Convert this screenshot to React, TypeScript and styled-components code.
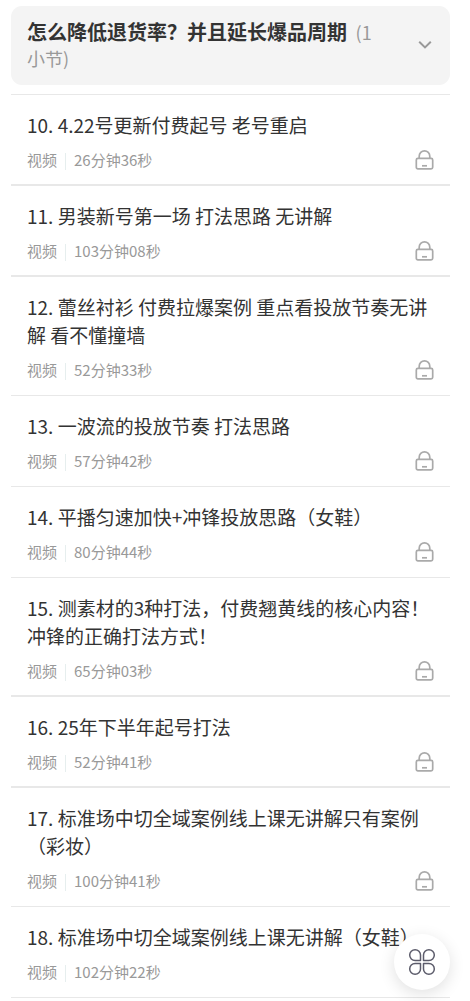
import React, { useState } from 'react';
import styled, { createGlobalStyle } from 'styled-components';

const GlobalStyle = createGlobalStyle`
  * {
    box-sizing: border-box;
  }
  body {
    margin: 0;
    background: #fff;
    color: #333;
    font-family: 'Noto Sans CJK SC', 'Noto Sans', sans-serif;
  }
`;

const Page = styled.main`
  padding: 6px 20px 0 11px;
`;

const ChapterHeading = styled.h2`
  margin: 0 0 9px;
  font-size: 20px;
`;

const ChapterToggle = styled.button`
  display: flex;
  align-items: center;
  justify-content: space-between;
  gap: 32px;
  width: 100%;
  padding: 13px 18px 14px 16px;
  border: 0;
  border-radius: 11px;
  background: #f4f4f4;
  color: #333;
  font: inherit;
  line-height: 26px;
  text-align: left;
  cursor: pointer;
`;

const ChapterTitle = styled.span`
  font-weight: 700;
  margin-right: 4px;
`;

const ChapterCount = styled.span`
  color: #999;
  font-size: 18px;
  font-weight: 400;
  line-height: 18px;
`;

const Chevron = styled.svg<{ $open: boolean }>`
  flex: none;
  transform: ${(p) => (p.$open ? 'none' : 'rotate(180deg)')};
`;

const LessonList = styled.ul`
  margin: 0;
  padding: 0;
  border-top: 1px solid #e8e8e8;
  list-style: none;
`;

const LessonItem = styled.li<{ $thick?: boolean }>`
  border-bottom: ${(p) => (p.$thick ? 2 : 1)}px solid #e8e8e8;
`;

const LessonLink = styled.a<{ $thick?: boolean }>`
  display: block;
  padding: 16px 16px ${(p) => (p.$thick ? 14 : 15)}px;
  color: inherit;
  text-decoration: none;
`;

const LessonTitle = styled.div`
  font-size: 19px;
  line-height: 28px;
`;

const LessonMeta = styled.div`
  display: flex;
  align-items: center;
  height: 20px;
  margin-top: 11px;
  color: #999;
  font-size: 15px;
  line-height: 20px;
`;

const Divider = styled.span`
  width: 1px;
  height: 17px;
  margin: 3px 8px 0;
  background: #e6eeee;
`;

const LockSlot = styled.span`
  display: flex;
  margin-left: auto;
`;

const MenuButton = styled.button`
  position: fixed;
  right: 20px;
  bottom: 11px;
  display: flex;
  align-items: center;
  justify-content: center;
  width: 56px;
  height: 56px;
  padding: 0;
  border: 0;
  border-radius: 50%;
  background: #fff;
  box-shadow: 0 4px 16px rgba(0, 0, 0, 0.12);
  cursor: pointer;
`;

interface Lesson {
  title: string;
  duration: string;
  thick?: boolean;
}

const lessons: Lesson[] = [
  { title: '10. 4.22号更新付费起号 老号重启', duration: '26分钟36秒', thick: true },
  { title: '11. 男装新号第一场 打法思路 无讲解', duration: '103分钟08秒', thick: true },
  { title: '12. 蕾丝衬衫 付费拉爆案例 重点看投放节奏无讲解 看不懂撞墙', duration: '52分钟33秒' },
  { title: '13. 一波流的投放节奏 打法思路', duration: '57分钟42秒' },
  { title: '14. 平播匀速加快+冲锋投放思路（女鞋）', duration: '80分钟44秒' },
  { title: '15. 测素材的3种打法，付费翘黄线的核心内容！冲锋的正确打法方式！', duration: '65分钟03秒', thick: true },
  { title: '16. 25年下半年起号打法', duration: '52分钟41秒', thick: true },
  { title: '17. 标准场中切全域案例线上课无讲解只有案例（彩妆）', duration: '100分钟41秒' },
  { title: '18. 标准场中切全域案例线上课无讲解（女鞋）', duration: '102分钟22秒' },
];

const LockIcon = () => (
  <svg width="19" height="20" viewBox="0 0 19 20" fill="none" stroke="#aaa" strokeWidth="1.7" role="img" aria-label="未解锁">
    <path d="M4.2 8.4V6.2a5.3 5.3 0 0 1 10.6 0v2.2" />
    <rect x="1.3" y="8.4" width="16.4" height="10.4" rx="1.6" />
    <path d="M7 15.8h5" />
  </svg>
);

const PetalsIcon = () => (
  <svg width="28" height="28" viewBox="0 0 28 28" fill="none" stroke="#5c5c6b" strokeWidth="1.5" strokeLinejoin="round" aria-hidden="true">
    <path d="M12.5 12.5H7.1A5.4 5.4 0 1 1 12.5 7.1Z" />
    <path d="M15.5 12.5h5.4A5.4 5.4 0 1 0 15.5 7.1Z" />
    <path d="M12.5 15.5H7.1A5.4 5.4 0 1 0 12.5 20.9Z" />
    <path d="M15.5 15.5h5.4A5.4 5.4 0 1 1 15.5 20.9Z" />
  </svg>
);

export default function App() {
  const [open, setOpen] = useState(true);

  return (
    <>
      <GlobalStyle />
      <Page>
        <ChapterHeading>
          <ChapterToggle type="button" aria-expanded={open} onClick={() => setOpen(!open)}>
            <span>
              <ChapterTitle>怎么降低退货率？并且延长爆品周期</ChapterTitle>{' '}
              <ChapterCount>(1小节)</ChapterCount>
            </span>
            <Chevron $open={open} width="14" height="10" viewBox="0 0 14 10" fill="none" stroke="#999" strokeWidth="2" aria-hidden="true">
              <path d="M1.2 1.8 7 7.4l5.8-5.6" />
            </Chevron>
          </ChapterToggle>
        </ChapterHeading>
        {open && (
          <LessonList>
            {lessons.map((lesson) => (
              <LessonItem key={lesson.title} $thick={lesson.thick}>
                <LessonLink href="#" $thick={lesson.thick}>
                  <LessonTitle>{lesson.title}</LessonTitle>
                  <LessonMeta>
                    <span>视频</span>
                    <Divider />
                    <span>{lesson.duration}</span>
                    <LockSlot>
                      <LockIcon />
                    </LockSlot>
                  </LessonMeta>
                </LessonLink>
              </LessonItem>
            ))}
          </LessonList>
        )}
      </Page>
      <MenuButton type="button" aria-label="菜单">
        <PetalsIcon />
      </MenuButton>
    </>
  );
}
